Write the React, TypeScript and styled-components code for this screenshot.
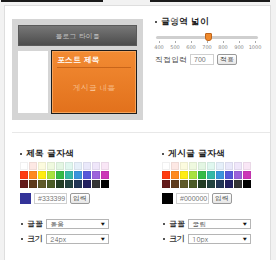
import React from 'react';
import styled, { createGlobalStyle } from 'styled-components';

const GlobalStyle = createGlobalStyle`
  html, body {
    margin: 0;
    padding: 0;
    background: #f2f2f2;
    font-family: Dotum, "Noto Sans CJK KR", "Noto Sans", sans-serif;
    color: #333;
  }
`

const Page = styled.div`
  width: 276px;
  height: 260px;
  overflow: hidden;
`

const TabStrip = styled.div`
  display: flex;
  height: 2px;
  padding-left: 1px;
  gap: 47px;
  margin-bottom: 3px;
`

const TabEdge = styled.div<{ w: number }>`
  width: ${p => p.w}px;
  background: #1a1a1a;
`

const Panel = styled.div`
  margin-left: 4px;
  width: 265px;
  height: 280px;
  background: #fff;
  border: 1px solid #dedede;
`

const TopSection = styled.div`
  display: flex;
  align-items: flex-start;
  padding: 13px 0 0 7px;
  height: 101px;
`

const Preview = styled.div`
  width: 119px;
  height: 89px;
  padding: 6px;
  background: #d5d5d5;
  display: flex;
  flex-direction: column;
  gap: 4px;
`

const BlogTitle = styled.div`
  height: 21px;
  background: linear-gradient(#777, #4c4c4c);
  border: 1px solid #5a5a5a;
  box-sizing: border-box;
  color: #c4c4c4;
  font-size: 7px;
  display: flex;
  align-items: center;
  justify-content: center;
`

const PreviewBody = styled.div`
  flex: 1;
  display: flex;
  gap: 3px;
`

const Sidebar = styled.div`
  width: 30px;
  margin-top: 1px;
  margin-bottom: 1px;
  background: #fff;
`

const Post = styled.div`
  flex: 1;
  border: 1px solid #1c1c1c;
  background: linear-gradient(#f28b33, #e2711c);
  box-shadow: inset 0 0 0 1px #f6a35a;
  display: flex;
  flex-direction: column;
  padding: 3px 5px 0;
`

const PostTitle = styled.div`
  color: #fff;
  font-size: 8px;
  font-weight: bold;
  padding-bottom: 2px;
  border-bottom: 1px solid #c8651a;
`

const PostBody = styled.div`
  flex: 1;
  display: flex;
  align-items: center;
  justify-content: center;
  color: #f8c193;
  font-size: 8px;
  padding-bottom: 6px;
`

const WidthBox = styled.div`
  margin: -3px 0 0 12px;
  width: 106px;
`

const Heading = styled.div`
  display: flex;
  align-items: center;
  gap: 4px;
  font-size: 9px;
  line-height: 11px;
  font-weight: bold;
  color: #222;
  white-space: nowrap;
  &::before {
    content: '';
    width: 2px;
    height: 2px;
    background: #555;
  }
`

const Slider = styled.div`
  position: relative;
  margin: 9px 0 0 1px;
  height: 3px;
  width: 102px;
  background: #cfcfcf;
  border-radius: 2px;
`

const Thumb = styled.div<{ left: number }>`
  position: absolute;
  left: ${p => p.left}px;
  top: -3px;
  width: 5px;
  height: 6px;
  background: #f08a2c;
  border: 1px solid #c0651a;
  border-radius: 1px 1px 3px 3px;
`

const Ticks = styled.div`
  display: flex;
  justify-content: space-between;
  width: 104px;
  margin-top: 2px;
`

const Tick = styled.div`
  display: flex;
  flex-direction: column;
  align-items: center;
  width: 8px;
  font-size: 5px;
  line-height: 7px;
  color: #888;
  font-family: "DejaVu Sans", sans-serif;
  &::before {
    content: '';
    width: 1px;
    height: 2px;
    background: #aaa;
    margin-bottom: 1px;
  }
`

const Row = styled.div<{ mt?: number }>`
  display: flex;
  align-items: center;
  gap: 3px;
  margin-top: ${p => p.mt ?? 0}px;
`

const Label = styled.span`
  font-size: 8px;
  color: #444;
  white-space: nowrap;
`

const Input = styled.div<{ w: number }>`
  width: ${p => p.w}px;
  height: 9px;
  border: 1px solid #cfcfcf;
  font-size: 7px;
  line-height: 9px;
  padding-left: 3px;
  color: #777;
  font-family: "Liberation Sans", sans-serif;
`

const Button = styled.div`
  height: 9px;
  padding: 0 2px;
  border: 1px solid #999;
  border-radius: 2px;
  background: linear-gradient(#fff, #e6e6e6);
  font-size: 7px;
  line-height: 9px;
  color: #333;
  white-space: nowrap;
`

const Divider = styled.div`
  margin: 12px 0 0 7px;
  height: 1px;
  background: #e8e8e8;
`

const BottomSection = styled.div`
  display: flex;
  padding: 15px 0 0 15px;
  gap: 53px;
`

const FontBox = styled.div`
  width: 89px;
`

const Palette = styled.div`
  display: grid;
  grid-template-columns: repeat(10, 8px);
  grid-auto-rows: 8px;
  gap: 1px;
  margin-top: 3px;
`

const Swatch = styled.div<{ c: string }>`
  background: ${p => p.c};
  box-shadow: inset 0 0 0 1px rgba(0, 0, 0, 0.06);
`

const Current = styled.div<{ c: string }>`
  width: 11px;
  height: 11px;
  background: ${p => p.c};
`

const Field = styled.div<{ mt: number }>`
  display: flex;
  align-items: center;
  margin-top: ${p => p.mt}px;
`

const FieldLabel = styled.div`
  width: 27px;
  display: flex;
  align-items: center;
  gap: 4px;
  font-size: 8px;
  font-weight: bold;
  color: #333;
  white-space: nowrap;
  &::before {
    content: '';
    width: 2px;
    height: 2px;
    margin-left: 1px;
    background: #555;
  }
`

const Select = styled.div`
  width: 56px;
  height: 8px;
  border: 1px solid #b5b5b5;
  padding: 0 3px;
  display: flex;
  align-items: center;
  justify-content: space-between;
  font-size: 7px;
  color: #555;
  &::after {
    content: '▼';
    font-size: 5px;
    color: #111;
  }
`

const palette = [
  '#ffffff', '#fde8e4', '#fcfbde', '#eff9df', '#e3f6e3', '#e0f7ef', '#e5eff9', '#e9e8fa', '#efe6fa', '#f9e6f6',
  '#ff3b10', '#ff8a1e', '#ffec12', '#a8e23e', '#35bb46', '#35b9a6', '#3a95dc', '#5558da', '#9c62dc', '#cc36b8',
  '#641a1a', '#5f3b1b', '#5f5a28', '#4b5b26', '#233d25', '#21423f', '#213656', '#222060', '#353535', '#000000',
]

const ticks = ['400', '500', '600', '700', '800', '900', '1000']

type ColorPickerProps = {
    title: string
    color: string
    font: string
    size: string
}

const ColorPicker = (props: ColorPickerProps) => (
    <FontBox>
        <Heading>{props.title}</Heading>
        <Palette>
            {palette.map((c, i) => <Swatch key={i} c={c}/>)}
        </Palette>
        <Row mt={5}>
            <Current c={props.color}/>
            <Input w={28}>{props.color}</Input>
            <Button>입력</Button>
        </Row>
        <Field mt={14}>
            <FieldLabel>글꼴</FieldLabel>
            <Select>{props.font}</Select>
        </Field>
        <Field mt={4}>
            <FieldLabel>크기</FieldLabel>
            <Select>{props.size}</Select>
        </Field>
    </FontBox>
)

const App = () => {
    return (
        <Page>
            <GlobalStyle/>
            <TabStrip>
                <TabEdge w={102}/>
                <TabEdge w={120}/>
            </TabStrip>
            <Panel>
                <TopSection>
                    <Preview>
                        <BlogTitle>블로그 타이틀</BlogTitle>
                        <PreviewBody>
                            <Sidebar/>
                            <Post>
                                <PostTitle>포스트 제목</PostTitle>
                                <PostBody>게시글 내용</PostBody>
                            </Post>
                        </PreviewBody>
                    </Preview>
                    <WidthBox>
                        <Heading>글영역 넓이</Heading>
                        <Slider>
                            <Thumb left={49}/>
                        </Slider>
                        <Ticks>
                            {ticks.map(t => <Tick key={t}>{t}</Tick>)}
                        </Ticks>
                        <Row mt={3}>
                            <Label>직접입력</Label>
                            <Input w={19}>700</Input>
                            <Button>적용</Button>
                        </Row>
                    </WidthBox>
                </TopSection>
                <Divider/>
                <BottomSection>
                    <ColorPicker title="제목 글자색" color="#333399" font="돋움" size="24px"/>
                    <ColorPicker title="게시글 글자색" color="#000000" font="굴림" size="10px"/>
                </BottomSection>
            </Panel>
        </Page>
    );
};

export default App;
